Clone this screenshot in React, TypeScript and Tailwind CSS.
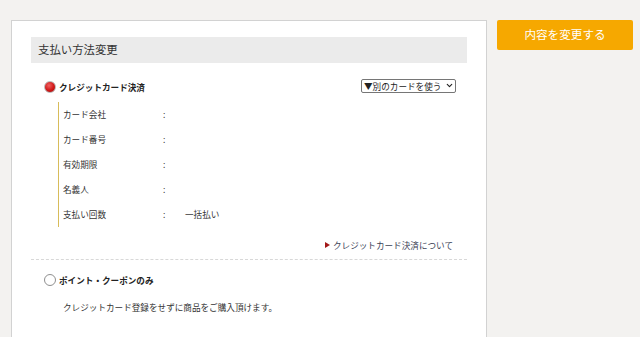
import { ChevronDown } from "lucide-react";

const font = { fontFamily: '"Noto Sans CJK JP", "Noto Sans", sans-serif' };

const rows = [
  { label: "カード会社", value: "" },
  { label: "カード番号", value: "" },
  { label: "有効期限", value: "" },
  { label: "名義人", value: "" },
  { label: "支払い回数", value: "一括払い" },
];

const App = () => {
  return (
    <div
      className="w-[640px] h-[337px] overflow-hidden bg-[#f3f2f0] flex gap-[10px] pt-[20px] pl-[11px]"
      style={font}
    >
      <div className="w-[476px] h-[400px] shrink-0 bg-white border border-[#d2d2d2] px-[19px] pt-[16px]">
        <div className="h-[26px] bg-[#ebebeb] flex items-center pl-[7px] text-[11.4px] text-[#333]">
          支払い方法変更
        </div>

        <div className="mt-[18px] flex items-center justify-between pl-[13px] pr-[11px]">
          <div className="flex items-center gap-[3px]">
            <span className="size-[12px] rounded-full border border-[#b9b9b9] bg-[radial-gradient(circle_at_40%_35%,#f06060_0%,#d01818_55%,#a00808_100%)]" />
            <span className="text-[8.6px] font-bold text-[#222]">クレジットカード決済</span>
          </div>
          <div className="w-[95px] h-[14px] -mt-[3px] border border-[#767676] rounded-[2px] flex items-center justify-between pl-[2px] pr-[1px] text-[8.6px] text-[#222] leading-none">
            <span>▼別のカードを使う</span>
            <ChevronDown className="size-[9px]" strokeWidth={3} />
          </div>
        </div>

        <div className="mt-[8px] ml-[27px] border-l border-[#d8bc5a]">
          {rows.map(r => (
            <div key={r.label} className="h-[25px] flex items-center text-[8.6px] text-[#333]">
              <span className="pl-[4px] w-[104px]">{r.label}</span>
              <span className="w-[22px]">:</span>
              <span>{r.value}</span>
            </div>
          ))}
        </div>

        <div className="mt-[12px] flex justify-end items-center gap-[3px] pr-[14px] text-[8.6px] text-[#3b4256]">
          <span className="w-0 h-0 border-y-[3.5px] border-y-transparent border-l-[5px] border-l-[#a31818]" />
          <span>クレジットカード決済について</span>
        </div>

        <div className="mt-[7px] border-t border-dashed border-[#d8d8d8]" />

        <div className="mt-[14px] flex items-center gap-[3px] pl-[13px]">
          <span className="size-[12px] rounded-full border border-[#8f8f8f] bg-white" />
          <span className="text-[8.6px] font-bold text-[#222]">ポイント・クーポンのみ</span>
        </div>
        <div className="mt-[14px] pl-[32px] text-[8.6px] text-[#333]">
          クレジットカード登録をせずに商品をご購入頂けます。
        </div>
      </div>

      <div>
        <div className="w-[136px] h-[30px] rounded-[2px] bg-[#f6a800] flex items-center justify-center text-white text-[11.6px]">
          内容を変更する
        </div>
      </div>
    </div>
  );
};

export default App;
